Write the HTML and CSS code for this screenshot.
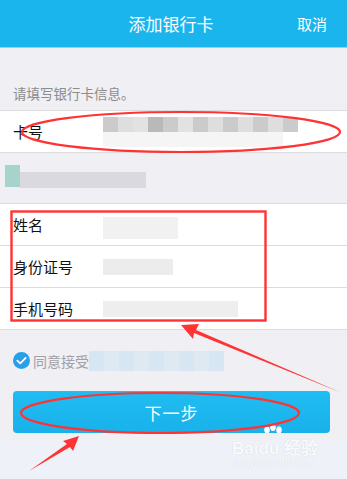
FILE: index.html
```html
<!DOCTYPE html>
<html lang="zh-CN">
<head>
  <meta charset="UTF-8" />
  <meta name="viewport" content="width=device-width, initial-scale=1.0" />
  <title>添加银行卡</title>
  <link rel="stylesheet" href="styles.css">
</head>
<body>
  <div class="page">
    <div class="topbar">
      <span class="title">添加银行卡</span>
      <span class="cancel">取消</span>
    </div>

    <p class="hint">请填写银行卡信息。</p>

    <div class="group">
      <div class="row">
        <span class="label">卡号</span>
        <div class="mosaic mosaic-card">
          <i></i><i></i><i></i><i></i><i></i><i></i><i></i><i></i><i></i><i></i><i></i><i></i><i></i>
        </div>
      </div>
    </div>

    <div class="bank-gap">
      <div class="mosaic mosaic-bank">
        <i class="teal"></i><i></i><i></i><i></i><i></i><i></i><i></i><i></i>
      </div>
    </div>

    <div class="group">
      <div class="row">
        <span class="label">姓名</span>
        <div class="mosaic mosaic-name"><i></i><i></i><i></i><i></i><i></i></div>
      </div>
      <div class="row">
        <span class="label">身份证号</span>
        <div class="mosaic mosaic-id"><i></i><i></i><i></i><i></i><i></i></div>
      </div>
      <div class="row">
        <span class="label">手机号码</span>
        <div class="mosaic mosaic-phone"><i></i><i></i><i></i><i></i><i></i><i></i><i></i><i></i><i></i></div>
      </div>
    </div>

    <div class="agree">
      <span class="check">
        <svg viewBox="0 0 18 18" width="17" height="17">
          <circle cx="9" cy="9" r="9" fill="#2a9fe9"/>
          <path d="M4.6 9.2 L7.7 12 L13.4 6.2" fill="none" stroke="#fff" stroke-width="1.9" stroke-linecap="round" stroke-linejoin="round"/>
        </svg>
      </span>
      <span class="agree-text">同意接受</span>
      <div class="mosaic mosaic-terms"><i></i><i></i><i></i><i></i><i></i><i></i><i></i><i></i><i></i></div>
    </div>

    <div class="actions">
      <button class="next-btn">下一步</button>
    </div>

    <div class="watermark">
      <svg class="paw" viewBox="0 0 24 14" width="24" height="14">
        <ellipse cx="5" cy="6" rx="2.6" ry="3.4" fill="#fff"/>
        <ellipse cx="11" cy="3.5" rx="2.6" ry="3.4" fill="#fff"/>
        <ellipse cx="17" cy="6" rx="2.6" ry="3.4" fill="#fff"/>
      </svg>
      <span class="wm-logo">Bai<b>du</b> 经验</span>
      <span class="wm-url">jingyan.baidu.com</span>
    </div>

    <svg class="marks" viewBox="0 0 347 479" width="347" height="479">
      <ellipse cx="181" cy="132" rx="159" ry="20" fill="none" stroke="#f33" stroke-width="2.2"/>
      <rect x="11.5" y="211.5" width="254" height="109" fill="none" stroke="#f33" stroke-width="2.4"/>
      <ellipse cx="160" cy="413" rx="139" ry="20" fill="none" stroke="#f33" stroke-width="2.2"/>
      <path d="M181 325 L199 324 L196 330 L342 393 L194 333 L193 339 Z" fill="#f33"/>
      <path d="M79 436 L73 451 L70 447 L29 471 L67 444 L63 441 Z" fill="#f33"/>
    </svg>
  </div>
</body>
</html>
```

FILE: styles.css
```css
body {
  margin: 0;
  font-family: "Noto Sans CJK SC", "Noto Sans", sans-serif;
  background: #efeff4;
}
.page {
  position: relative;
  width: 347px;
  height: 479px;
  overflow: hidden;
  background: linear-gradient(to bottom, #efeff4 0, #efeff4 440px, #eef1f8 440px);
}
.topbar {
  height: 47px;
  background: #1bb5ee;
  border-bottom: 1px solid #8fd6f3;
  display: flex;
  align-items: center;
  justify-content: center;
  position: relative;
  color: #fff;
}
.title {
  font-size: 17px;
  margin-left: -5px;
}
.cancel {
  position: absolute;
  right: 20px;
  top: 13px;
  font-size: 15px;
}
.hint {
  margin: 0;
  padding: 35px 0 0 13px;
  height: 27px;
  font-size: 13.5px;
  color: #8c8c8c;
  line-height: 20px;
}
.group {
  background: #fff;
  border-top: 1px solid #dcdcdf;
  border-bottom: 1px solid #dcdcdf;
}
.row {
  height: 41px;
  display: flex;
  align-items: center;
  padding-left: 13px;
  border-top: 1px solid #dcdcdf;
}
.row:first-child {
  border-top: none;
}
.label {
  width: 90px;
  font-size: 15px;
  color: #111;
}
.mosaic {
  display: flex;
  height: 16px;
  filter: blur(0.6px);
}
.mosaic i {
  width: 15px;
  height: 100%;
  background: #dedede;
}
.mosaic-card {
  height: 30px;
  flex-wrap: wrap;
  width: 195px;
}
.mosaic-card i {
  height: 15px;
}
.mosaic-card i:nth-child(odd) { background: #cbcbcb; }
.mosaic-card i:nth-child(4) { background: #b9b9b9; }
.mosaic-card i:nth-child(3), .mosaic-card i:nth-child(6) { background: #e2e2e2; }
.mosaic-card::after {
  content: "";
  width: 180px;
  height: 15px;
  background: #f5f5f5;
}
.bank-gap {
  height: 50px;
  display: flex;
  align-items: flex-start;
  padding: 8px 0 0 5px;
  box-sizing: border-box;
}
.mosaic-bank {
  height: 28px;
  margin-top: 4px;
}
.mosaic-bank i {
  background: #d9d9df;
  width: 18px;
  height: 16px;
  margin-top: 7px;
}
.mosaic-bank i.teal {
  background: #a6d4cc;
  width: 15px;
  height: 22px;
  margin-top: 0;
}
.row .mosaic {
  margin-left: 0;
}
.mosaic-name i { background: #f1f1f1; height: 22px; }
.mosaic-id i { background: #ececec; width: 14px; }
.mosaic-phone i { background: #eeeeee; }
.agree {
  height: 61px;
  display: flex;
  align-items: center;
  padding-left: 13px;
  box-sizing: border-box;
}
.check {
  display: flex;
  margin-right: 3px;
}
.agree-text {
  font-size: 14px;
  color: #a0a0a6;
}
.mosaic-terms {
  height: 20px;
  margin-left: 0;
}
.mosaic-terms i {
  background: #d6e7f3;
  width: 15px;
}
.mosaic-terms i:nth-child(even) { background: #dfe9f2; }
.actions {
  padding: 0 17px 0 13px;
}
.next-btn {
  width: 100%;
  height: 42px;
  border: none;
  border-radius: 4px;
  background: linear-gradient(to bottom, #1fbdf2, #19b1ea);
  color: #fff;
  font-family: inherit;
  font-size: 17px;
  letter-spacing: 1px;
}
.watermark {
  position: absolute;
  left: 232px;
  top: 424px;
  display: flex;
  flex-direction: column;
  color: rgba(255, 255, 255, 0.9);
  text-shadow: 0 0 1px #c9d0de;
}
.paw {
  margin: 0 0 -4px 30px;
  filter: drop-shadow(0 0 0.6px #c9d0de);
}
.wm-logo {
  font-family: "Liberation Sans", sans-serif;
  font-size: 17px;
  font-weight: bold;
}
.wm-url {
  font-family: "Liberation Sans", sans-serif;
  font-size: 10px;
  margin-top: -2px;
  margin-left: 2px;
}
.marks {
  position: absolute;
  left: 0;
  top: 0;
  pointer-events: none;
}
```
